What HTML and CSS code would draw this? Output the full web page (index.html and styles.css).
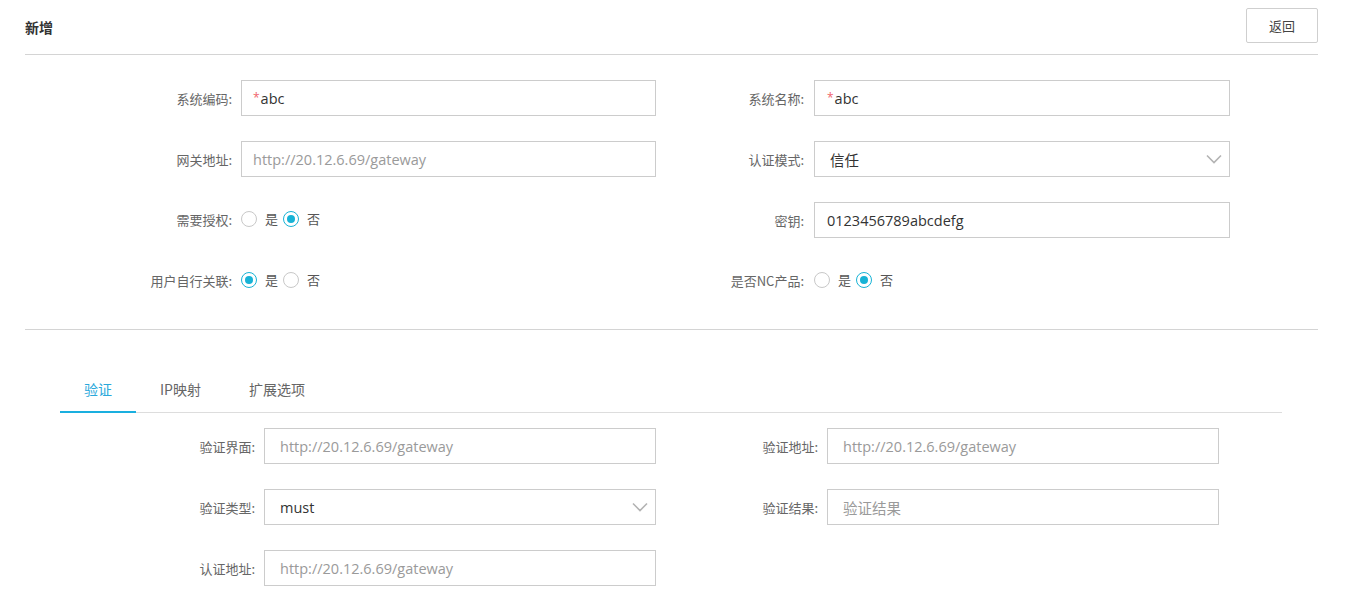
FILE: index.html
```html
<!DOCTYPE html>
<html lang="zh-CN">
<head>
<meta charset="utf-8">
<title>新增</title>
<link rel="stylesheet" href="styles.css">
</head>
<body>
<div class="page">
  <div class="header">
    <h1 class="title">新增</h1>
    <button class="btn">返回</button>
  </div>

  <div class="form form-main">
    <label class="lbl">系统编码:</label>
    <div class="input"><span class="req">*</span>abc</div>
    <label class="lbl">系统名称:</label>
    <div class="input input-r"><span class="req">*</span>abc</div>

    <label class="lbl">网关地址:</label>
    <div class="input ph">http://20.12.6.69/gateway</div>
    <label class="lbl">认证模式:</label>
    <div class="input input-sel">信任<svg class="chev" width="16" height="10" viewBox="0 0 16 10"><path d="M1 1.5 L8 8.5 L15 1.5" fill="none" stroke="#b3b3b3" stroke-width="1.6"/></svg></div>

    <label class="lbl lbl-radio">需要授权:</label>
    <div class="radios"><span class="radio"></span><span class="rtext">是</span><span class="radio on"></span><span class="rtext">否</span></div>
    <label class="lbl">密钥:</label>
    <div class="input input-r">0123456789abcdefg</div>

    <label class="lbl lbl-radio">用户自行关联:</label>
    <div class="radios"><span class="radio on"></span><span class="rtext">是</span><span class="radio"></span><span class="rtext">否</span></div>
    <label class="lbl lbl-radio">是否NC产品:</label>
    <div class="radios"><span class="radio"></span><span class="rtext">是</span><span class="radio on"></span><span class="rtext">否</span></div>
  </div>

  <div class="tabs-wrap">
    <div class="tabs">
      <div class="tab active">验证</div>
      <div class="tab">IP映射</div>
      <div class="tab">扩展选项</div>
    </div>
  </div>

  <div class="form form-sub">
    <label class="lbl">验证界面:</label>
    <div class="input input-l ph">http://20.12.6.69/gateway</div>
    <label class="lbl">验证地址:</label>
    <div class="input input-l ph">http://20.12.6.69/gateway</div>

    <label class="lbl">验证类型:</label>
    <div class="input input-l input-sel">must<svg class="chev" width="16" height="10" viewBox="0 0 16 10"><path d="M1 1.5 L8 8.5 L15 1.5" fill="none" stroke="#b3b3b3" stroke-width="1.6"/></svg></div>
    <label class="lbl">验证结果:</label>
    <div class="input input-l ph">验证结果</div>

    <label class="lbl">认证地址:</label>
    <div class="input input-l ph">http://20.12.6.69/gateway</div>
  </div>
</div>
</body>
</html>
```

FILE: styles.css
```css
* { box-sizing: border-box; }
html, body { margin: 0; padding: 0; background: #fff; }
body {
  font-family: "Open Sans", "Noto Sans CJK SC", sans-serif;
  font-size: 14px;
  color: #333;
}
.page {
  padding: 0 32px 0 25px;
}
.header {
  height: 55px;
  display: flex;
  align-items: flex-start;
  justify-content: space-between;
  border-bottom: 1px solid #d4d4d4;
}
.title {
  margin: 0;
  padding-top: 17px;
  font-size: 14px;
  line-height: 20px;
  font-weight: bold;
  color: #333;
  font-family: "Noto Sans CJK SC", sans-serif;
}
.btn {
  margin-top: 8px;
  width: 72px;
  height: 35px;
  background: #fff;
  border: 1px solid #cfcfcf;
  border-radius: 2px;
  font-family: "Noto Sans CJK SC", sans-serif;
  font-size: 13px;
  color: #444;
  padding: 0;
}
.form {
  display: grid;
  grid-auto-rows: 36px;
  row-gap: 25px;
  align-items: center;
}
.form-main {
  grid-template-columns: 216px 415px 158px 416px;
  padding: 25px 0 30px;
  border-bottom: 1px solid #d4d4d4;
}
.lbl {
  font-family: "Noto Sans CJK SC", sans-serif;
  font-size: 13px;
  color: #666;
  text-align: right;
  padding-right: 9px;
  white-space: nowrap;
}
.form-main .lbl:nth-of-type(2n) { padding-right: 10px; }
.lbl-radio { position: relative; top: -1px; }
.input {
  height: 36px;
  border: 1px solid #cccccc;
  display: flex;
  align-items: center;
  padding-left: 11px;
  color: #333;
  font-size: 14.5px;
  white-space: nowrap;
}
.input-r { padding-left: 12px; }
.input.ph { color: #9a9a9a; }
.form-main .input.ph { padding-left: 11px; }
.req { color: #f0636b; font-size: 12px; margin-right: 1px; position: relative; top: -1px; }
.input-sel {
  padding-left: 15px;
  justify-content: space-between;
  padding-right: 7px;
  font-family: "Noto Sans CJK SC", "Open Sans", sans-serif;
}
.input-l { padding-left: 15px; }
.input-l.input-sel { font-family: "Open Sans", "Noto Sans CJK SC", sans-serif; }
.chev { display: block; }
.radios {
  display: flex;
  align-items: center;
  height: 36px;
  position: relative;
  top: -1px;
}
.radio {
  width: 16px;
  height: 16px;
  border-radius: 50%;
  border: 1px solid #c8c8c8;
  background: #fff;
  display: inline-block;
  position: relative;
  flex: none;
}
.radio.on { border-color: #17b3d6; }
.radio.on::after {
  content: "";
  position: absolute;
  left: 3px;
  top: 3px;
  width: 8px;
  height: 8px;
  border-radius: 50%;
  background: #17b3d6;
}
.rtext {
  font-family: "Noto Sans CJK SC", sans-serif;
  font-size: 13px;
  color: #555;
  margin: 0 8px 0 8px;
  line-height: 16px;
}
.rtext:nth-child(2) { margin-right: 5px; }
.tabs-wrap {
  padding: 42px 36px 0 35px;
}
.tabs {
  display: flex;
  height: 41px;
  border-bottom: 1px solid #dddddd;
}
.tab {
  padding: 0 24px;
  font-family: "Noto Sans CJK SC", sans-serif;
  font-size: 14px;
  color: #666;
  line-height: 34px;
  height: 41px;
}
.tab.active {
  color: #2aa8db;
  border-bottom: 2px solid #1aafdf;
}
.form-sub {
  grid-template-columns: 239px 392px 171px 392px;
  padding-top: 15px;
}
```
